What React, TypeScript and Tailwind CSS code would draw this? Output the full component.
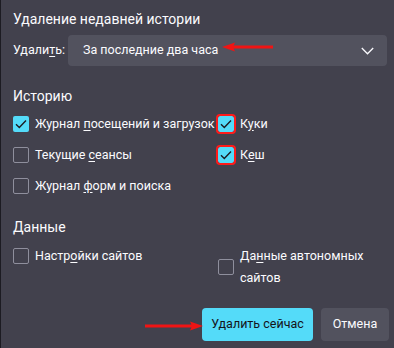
import React from 'react'

const font = { fontFamily: 'Roboto, "Noto Sans", sans-serif' }

function Box({ checked, marked }: { checked?: boolean; marked?: boolean }) {
  return (
    <span
      className={`relative flex h-4 w-4 flex-shrink-0 items-center justify-center rounded-[2px] ${
        checked ? 'bg-[#54dbf9]' : 'border border-[#8f8f9d]'
      } ${marked ? 'outline-2 outline-[#ff1a1a] outline-offset-0' : ''}`}
    >
      {checked && (
        <svg width="14" height="14" viewBox="0 0 14 14" fill="none">
          <path d="M2 7.2 L5.3 10.4 L12 3.6" stroke="#1c1b22" strokeWidth="1.4" />
        </svg>
      )}
    </span>
  )
}

function Check({
  label,
  checked,
  marked,
}: {
  label: React.ReactNode
  checked?: boolean
  marked?: boolean
}) {
  return (
    <div className="flex h-[31px] items-center gap-[6px]">
      <Box checked={checked} marked={marked} />
      <span className="whitespace-nowrap text-[12.5px] leading-[22px] text-[#fbfbfe]">{label}</span>
    </div>
  )
}

function ArrowLeft() {
  return (
    <svg width="52" height="10" viewBox="0 0 52 10" className="absolute left-[221px] top-[42px]">
      <path d="M10 5 H51" stroke="#f01414" strokeWidth="3" />
      <path d="M0 5 L13 0.5 L11 5 L13 9.5 Z" fill="#f01414" />
    </svg>
  )
}

function ArrowRight() {
  return (
    <svg width="58" height="10" viewBox="0 0 58 10" className="absolute left-[144px] top-[321px]">
      <path d="M0 5 H47" stroke="#f01414" strokeWidth="3" />
      <path d="M58 5 L45 0.5 L47 5 L45 9.5 Z" fill="#f01414" />
    </svg>
  )
}

export default function App() {
  return (
    <div
      style={font}
      className="relative h-[348px] w-[394px] overflow-hidden border-l border-[#1c1b22] bg-[#42414d] pl-3 pr-[5px] text-[#fbfbfe]"
    >
      <div className="pt-[9px] text-[14px] leading-[20px]">Удаление недавней истории</div>

      <div className="mt-[6px] mr-[2px] flex items-center">
        <span className="w-[55px] text-[12.5px]">
          Удали<span className="underline underline-offset-2">т</span>ь:
        </span>
        <div className="flex h-[31px] flex-1 items-center justify-between rounded-[4px] bg-[#52525e] pl-[15px] pr-[13px]">
          <span className="text-[12.5px]">За последние два часа</span>
          <svg width="13" height="8" viewBox="0 0 13 8" fill="none">
            <path d="M0.8 1 L6.5 6.8 L12.2 1" stroke="#fbfbfe" strokeWidth="1.3" />
          </svg>
        </div>
      </div>

      <div className="mt-[20px] text-[14px] leading-[20px]">Историю</div>

      <div className="mt-[2px] grid grid-cols-[205px_1fr]">
        <Check
          checked
          label={
            <>
              Журнал <span className="underline underline-offset-2">п</span>осещений и загрузок
            </>
          }
        />
        <Check
          checked
          marked
          label={
            <>
              К<span className="underline underline-offset-2">у</span>ки
            </>
          }
        />
        <Check
          label={
            <>
              Текущие <span className="underline underline-offset-2">с</span>еансы
            </>
          }
        />
        <Check
          checked
          marked
          label={
            <>
              К<span className="underline underline-offset-2">е</span>ш
            </>
          }
        />
        <Check
          label={
            <>
              Журнал <span className="underline underline-offset-2">ф</span>орм и поиска
            </>
          }
        />
      </div>

      <div className="mt-[16px] text-[14px] leading-[20px]">Данные</div>

      <div className="mt-[8px] grid grid-cols-[205px_1fr]">
        <div className="flex h-[22px] items-center gap-[6px] self-start">
          <Box />
          <span className="whitespace-nowrap text-[12.5px] leading-[22px]">
            Настр<span className="underline underline-offset-2">о</span>йки сайтов
          </span>
        </div>
        <div className="flex items-center gap-[6px]">
          <Box />
          <span className="text-[12.5px] leading-[22px]">
            Да<span className="underline underline-offset-2">н</span>ные автономных
            <br />
            сайтов
          </span>
        </div>
      </div>

      <div className="mt-[19px] flex justify-end gap-2">
        <button className="h-[33px] w-[111px] rounded-[4px] bg-[#54dbf9] text-[12.5px] text-[#15141a]">
          Удалить сейчас
        </button>
        <button className="h-[33px] w-[68px] rounded-[4px] bg-[#52525e] text-[12.5px] text-[#fbfbfe]">
          Отмена
        </button>
      </div>

      <ArrowLeft />
      <ArrowRight />
    </div>
  )
}
